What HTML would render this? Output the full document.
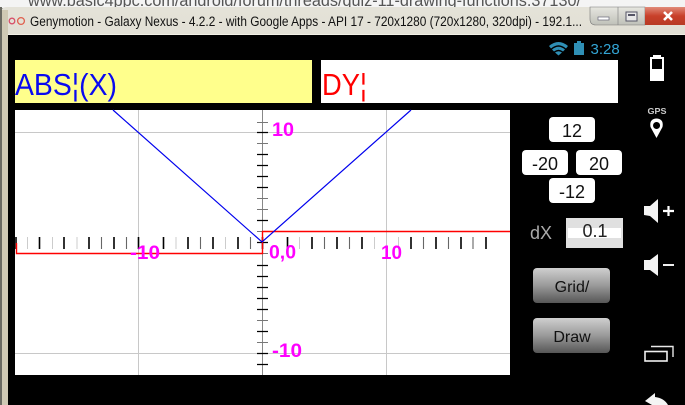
<!DOCTYPE html>
<html><head><meta charset="utf-8"><style>
html,body{margin:0;padding:0;width:685px;height:405px;overflow:hidden;background:#000}
svg{display:block;filter:blur(.35px)}
text{font-family:"Liberation Sans",sans-serif}
</style></head><body>
<svg width="685" height="405" viewBox="0 0 685 405" xmlns="http://www.w3.org/2000/svg">
<defs>
<linearGradient id="tb" x1="0" y1="0" x2="0" y2="1"><stop offset="0" stop-color="#e4e2d8"/><stop offset="0.5" stop-color="#d6d3c4"/><stop offset="1" stop-color="#cfccbb"/></linearGradient>
<linearGradient id="btn" x1="0" y1="0" x2="0" y2="1"><stop offset="0" stop-color="#cfcfcf"/><stop offset="0.5" stop-color="#9a9a9a"/><stop offset="1" stop-color="#565656"/></linearGradient>
<linearGradient id="cl" x1="0" y1="0" x2="0" y2="1"><stop offset="0" stop-color="#e08a78"/><stop offset="0.5" stop-color="#c8402a"/><stop offset="1" stop-color="#b83a25"/></linearGradient>
<linearGradient id="mb" x1="0" y1="0" x2="0" y2="1"><stop offset="0" stop-color="#e6e6e0"/><stop offset="1" stop-color="#bfc0b8"/></linearGradient>
</defs>
<!-- page behind -->
<rect width="685" height="8" fill="#f4f4f4"/>
<text x="28" y="6" font-size="17" fill="#555" textLength="553" lengthAdjust="spacingAndGlyphs">www.basic4ppc.com/android/forum/threads/quiz-11-drawing-functions.37130/</text>
<!-- window frame -->
<path d="M0 405V14Q0 7 7 7H685V35H8V405Z" fill="url(#tb)"/>
<rect x="0" y="7" width="2" height="398" fill="#6a6a62"/>
<rect x="2" y="10" width="6" height="395" fill="#cfc9b4"/>
<rect x="8" y="34" width="677" height="1" fill="#f2f0e6"/>
<text x="30" y="26" font-size="13.500" fill="#111" textLength="552" lengthAdjust="spacingAndGlyphs">Genymotion - Galaxy Nexus - 4.2.2 - with Google Apps - API 17 - 720x1280 (720x1280, 320dpi) - 192.1...</text>
<circle cx="12" cy="21" r="2.8" fill="none" stroke="#d8506a" stroke-width="1.3"/>
<circle cx="21" cy="21" r="3.4" fill="none" stroke="#e0604e" stroke-width="1.3"/>
<!-- window buttons -->
<path d="M590 7H645V25H596Q590 25 590 19Z" fill="url(#mb)" stroke="#777" stroke-width=".6"/>
<line x1="618" y1="7" x2="618" y2="25" stroke="#888" stroke-width=".7"/>
<rect x="645" y="7" width="40" height="18" fill="url(#cl)"/>
<rect x="598" y="17" width="11" height="3" fill="#fff" stroke="#667" stroke-width=".7"/>
<rect x="626" y="12" width="11" height="9" fill="#e8e8e8" stroke="#556" stroke-width="1"/>
<rect x="628" y="14" width="7" height="2" fill="#556"/>
<path d="M664 12L672 20M672 12L664 20" stroke="#fff" stroke-width="2.600" fill="none"/>
<!-- status bar -->
<g fill="#2f8fb5">
<path d="M549 46Q558.500 38 568 46L566 48.500Q558.500 42 551 48.500Z"/>
<path d="M552 49.500Q558.500 44 565 49.500L563 51.500Q558.500 48 554 51.500Z"/>
<path d="M555 52.500Q558.500 50 562 52.500L558.500 55.500Z"/>
<path d="M574 43H577V41H581V43H584V55H574Z"/>
</g>
<text x="590.500" y="54" font-size="15" fill="#33a5d5">3:28</text>
<!-- inputs -->
<rect x="15" y="60" width="297" height="43" fill="#ffff8c"/>
<rect x="321" y="60" width="297" height="43" fill="#fff"/>
<text x="15" y="95" font-size="31" fill="#0a0af0" textLength="102" lengthAdjust="spacingAndGlyphs">ABS¦(X)</text>
<text x="322" y="95" font-size="31" fill="#f00" textLength="45" lengthAdjust="spacingAndGlyphs">DY¦</text>
<!-- plot -->
<rect x="15" y="110" width="495" height="265" fill="#fff"/>
<g stroke="#c8c8c8" stroke-width="1">
<line x1="138.500" y1="110" x2="138.500" y2="375"/>
<line x1="386.500" y1="110" x2="386.500" y2="375"/>
<line x1="15" y1="132.500" x2="510" y2="132.500"/>
<line x1="15" y1="353.500" x2="510" y2="353.500"/>
</g>
<line x1="262.500" y1="110" x2="262.500" y2="375" stroke="#888"/>
<!-- x ticks -->
<g stroke-width="1.600" stroke="#000">
<path d="M16 237V249M39.500 237V249M64 237V249M89 237V249M114 237V249M138.500 237V249M163.500 237V249M188 237V249M213 237V249M238 237V249M262.500 237V249M287.500 237V249M312 237V249M337 237V249M362 237V249M411 237V249M436 237V249M461 237V249M486 237V249"/>
</g>
<g stroke-width="1.100" stroke="#666">
<path d="M101.500 237V249M126.500 237V249M200.500 237V249M250.500 237V249M324.500 237V249M349.500 237V249M423.500 237V249M448.500 237V249M473 237V249"/>
</g>
<g stroke-width="1" stroke="#ccc">
<path d="M27.500 237V249M52.500 237V249M77 237V249M176 237V249M225.500 237V249M299.500 237V249M374.500 237V249M398.500 237V249"/>
</g>
<!-- y ticks -->
<g stroke="#000" stroke-width="1.300">
<path d="M257 132.500H268M257 154.500H268M257 165.500H268M257 176.500H268M257 187.500H268M257 220.500H268M257 242.500H268M257 265.500H268M257 276.500H268M257 287.500H268M257 298.500H268M257 309.500H268M257 331.500H268M257 353.500H268M257 364.500H268"/>
</g>
<g stroke="#777" stroke-width="1">
<path d="M257 122.500H268M257 143.500H268M257 198.500H268M257 209.500H268M257 231.500H268M257 253.500H268M257 320.500H268M257 342.500H268"/>
</g>
<!-- curves -->
<path d="M16.500 243V253.500H262.500V231.500H510" fill="none" stroke="#f00" stroke-width="1.400"/>
<path d="M113 110L262 242L411 110" fill="none" stroke="#0000ee" stroke-width="1.200"/>
<!-- labels -->
<g fill="#ff00ff" font-size="19.500" font-weight="bold">
<text x="272" y="136" textLength="22" lengthAdjust="spacingAndGlyphs">10</text>
<text x="269" y="258.500" textLength="27" lengthAdjust="spacingAndGlyphs">0,0</text>
<text x="381" y="259" textLength="21" lengthAdjust="spacingAndGlyphs">10</text>
<text x="130" y="259" textLength="30" lengthAdjust="spacingAndGlyphs">-10</text>
<text x="272" y="357" textLength="30" lengthAdjust="spacingAndGlyphs">-10</text>
</g>
<!-- right controls -->
<g fill="#fff">
<rect x="549" y="117" width="46" height="25" rx="4"/>
<rect x="522" y="150" width="46" height="25" rx="4"/>
<rect x="576" y="150" width="46" height="25" rx="4"/>
<rect x="549" y="178" width="46" height="25" rx="4"/>
</g>
<g font-size="18" fill="#111" text-anchor="middle">
<text x="572" y="137">12</text>
<text x="545" y="170">-20</text>
<text x="599" y="170">20</text>
<text x="572" y="198">-12</text>
</g>
<text x="530" y="239" font-size="18" fill="#aaa">dX</text>
<rect x="566" y="218" width="57" height="30" fill="#e0e0e0"/>
<rect x="568" y="228" width="53" height="10" fill="#fff"/>
<text x="595" y="237" font-size="18" fill="#222" text-anchor="middle">0.1</text>
<rect x="533" y="268" width="77" height="35" rx="4" fill="url(#btn)"/>
<rect x="533" y="318" width="77" height="35" rx="4" fill="url(#btn)"/>
<g font-size="16" fill="#111" text-anchor="middle">
<text x="572" y="292">Grid/</text>
<text x="572" y="342">Draw</text>
</g>
<!-- side nav icons -->
<path fill-rule="evenodd" fill="#fff" d="M650 57H653V55H661V57H664V81H650ZM652 59V69H662V59Z"/>
<text x="657" y="114" font-size="8.500" font-weight="bold" fill="#ccc" text-anchor="middle" textLength="19" lengthAdjust="spacingAndGlyphs">GPS</text>
<path fill-rule="evenodd" fill="#fff" d="M656.500 138L650.500 127Q649 119 656.500 118.500Q664 119 662.500 127ZM656.500 122A3.500 3.500 0 1 0 656.600 122Z"/>
<path fill="#f4f4f4" d="M644 215V206H650L658 199V223L650 216Z"/>
<path d="M663 211H674M668.500 206V216" stroke="#fff" stroke-width="2.200" fill="none"/>
<path fill="#f4f4f4" d="M644 270V260H650L658 254V276L650 270Z"/>
<path d="M663 265H674" stroke="#eee" stroke-width="2"/>
<rect x="645" y="351.500" width="22" height="9.500" fill="none" stroke="#f0f0f0" stroke-width="1.600"/>
<path d="M651 346.500H673V357" fill="none" stroke="#e8e8e8" stroke-width="1.400"/>
<path fill="#f4f4f4" d="M645 401L655 393V397Q664 398 668 405H652Z"/>
</svg>
</body></html>
